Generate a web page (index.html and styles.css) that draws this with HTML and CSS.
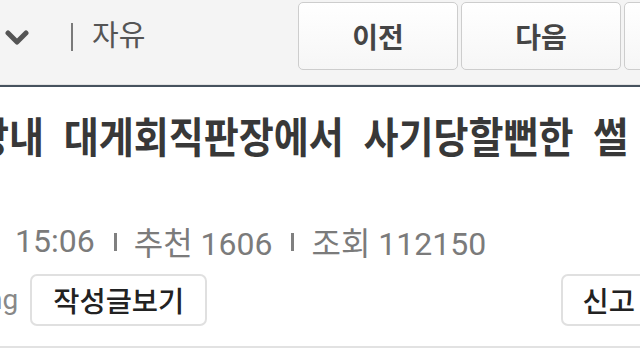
FILE: index.html
```html
<!DOCTYPE html>
<html lang="ko">
<head>
<meta charset="utf-8">
<link rel="stylesheet" href="styles.css">
</head>
<body>
<div class="page">
  <div class="topwrap">
    <header class="topbar">
      <div class="tb-left">
        <svg class="chev" width="24" height="16" viewBox="0 0 24 16"><polyline points="3,3 12,12 21,3" fill="none" stroke="#555" stroke-width="5" stroke-linecap="round" stroke-linejoin="round"/></svg>
        <span class="tb-sep"></span>
        <span class="tb-board">자유</span>
      </div>
      <nav class="tb-nav">
        <button class="tb-btn">이전</button>
        <button class="tb-btn">다음</button>
        <button class="tb-btn">목록</button>
      </nav>
    </header>
  </div>
  <h1 class="title">장내 대게회직판장에서 사기당할뻔한 썰</h1>
  <div class="meta">
    <span class="meta-item">15:06</span>
    <span class="meta-sep"></span>
    <span class="meta-item">추천 1606</span>
    <span class="meta-sep"></span>
    <span class="meta-item">조회 112150</span>
  </div>
  <div class="actions">
    <span class="nick">ng</span>
    <button class="act-btn">작성글보기</button>
    <span class="spacer"></span>
    <button class="act-btn act-report">신고</button>
  </div>
</div>
</body>
</html>
```

FILE: styles.css
```css
html, body {
  margin: 0;
  padding: 0;
  background: #fff;
  overflow: hidden;
}
.page {
  width: 640px;
  height: 360px;
  overflow: hidden;
  font-family: "Noto Sans CJK KR", "Noto Sans", sans-serif;
}
.topwrap {
  width: 800px;
  border-bottom: 2px solid #46525e;
}
.topbar {
  display: flex;
  align-items: flex-start;
  height: 85px;
  background: #f4f4f4;
  border-bottom: 1px solid #e4e4e4;
  box-sizing: border-box;
}
.tb-left {
  flex: 0 0 298px;
  display: flex;
  align-items: center;
  height: 72px;
}
.chev {
  margin-left: 5px;
  margin-top: 3px;
  flex: 0 0 auto;
}
.tb-sep {
  width: 2px;
  height: 28px;
  background: #7a7a7a;
  margin-left: 42px;
  margin-top: 2px;
}
.tb-board {
  margin-left: 19px;
  font-size: 29px;
  line-height: 36px;
  color: #555;
  margin-top: -6px;
}
.tb-nav {
  display: flex;
  gap: 3px;
  padding-top: 2px;
}
.tb-btn {
  flex: 0 0 160px;
  width: 160px;
  height: 68px;
  border: 1px solid #cdcdcd;
  border-radius: 5px;
  background: linear-gradient(#ffffff, #f6f6f6);
  font-family: "Noto Sans CJK KR", sans-serif;
  font-weight: 700;
  font-size: 28px;
  color: #454545;
  padding: 0;
  line-height: 1;
}
.title {
  margin: 24px 0 0 -26px;
  font-size: 42px;
  line-height: 48px;
  font-weight: 700;
  color: #383838;
  white-space: nowrap;
  word-spacing: 10px;
  transform: scaleX(0.906);
  transform-origin: left center;
}
.meta {
  display: flex;
  align-items: center;
  margin-top: 62px;
  padding-left: 15px;
  height: 40px;
  font-family: Roboto, "Noto Sans CJK KR", sans-serif;
  font-size: 32px;
  color: #7b7b7b;
  white-space: nowrap;
}
.meta-sep {
  width: 3px;
  height: 18px;
  background: #808080;
  margin: 2px 17px 0 19px;
}
.actions {
  display: flex;
  align-items: center;
  width: 657px;
  margin-top: 13px;
  padding-bottom: 20px;
  border-bottom: 2px solid #e2e2e2;
  box-sizing: border-box;
}
.nick {
  margin-left: -13px;
  font-family: Roboto, sans-serif;
  font-size: 28px;
  color: #888;
  line-height: 52px;
}
.act-btn {
  height: 52px;
  margin-left: 12px;
  border: 2px solid #e0e0e0;
  border-radius: 7px;
  background: #fff;
  font-family: "Noto Sans CJK KR", sans-serif;
  font-weight: 500;
  font-size: 28.5px;
  color: #222;
  padding: 0 21px;
  line-height: 1;
  white-space: nowrap;
}
.act-report {
  padding: 0 20px;
}
.spacer {
  flex: 1;
}
```
